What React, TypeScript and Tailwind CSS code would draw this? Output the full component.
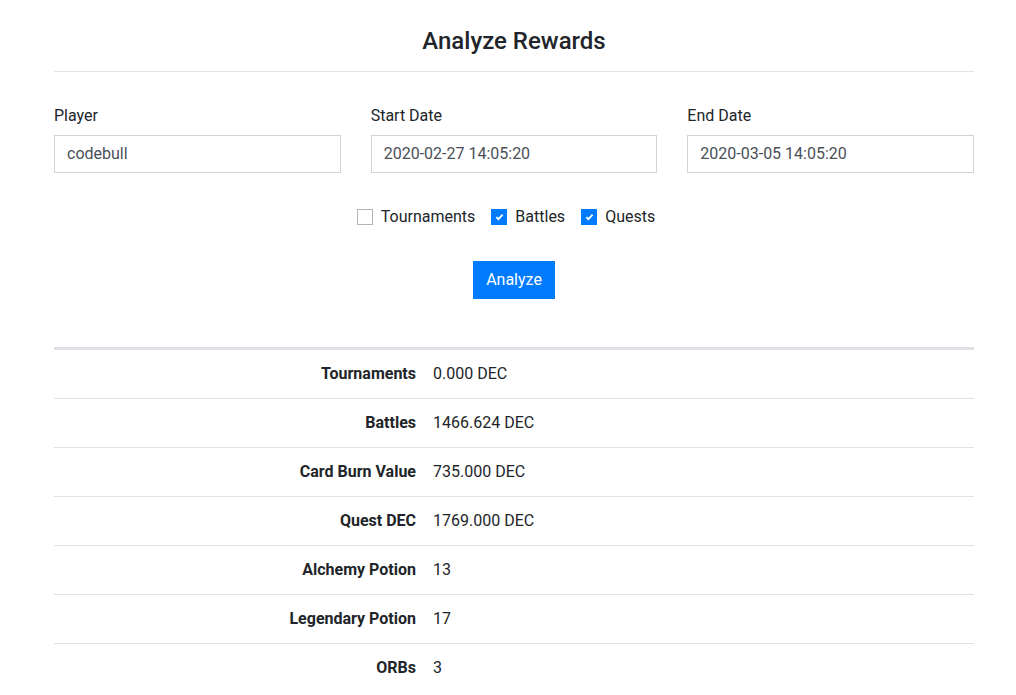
import React from "react";

const rows: [string, string][] = [
  ["Tournaments", "0.000 DEC"],
  ["Battles", "1466.624 DEC"],
  ["Card Burn Value", "735.000 DEC"],
  ["Quest DEC", "1769.000 DEC"],
  ["Alchemy Potion", "13"],
  ["Legendary Potion", "17"],
  ["ORBs", "3"],
];

function Check({ checked, label }: { checked: boolean; label: string }) {
  return (
    <div className="flex items-center gap-[8px]">
      {checked ? (
        <div className="w-[16px] h-[16px] bg-[#007bff] flex items-center justify-center">
          <svg width="9" height="8" viewBox="0 0 9 8">
            <path d="M1.3 4.2 L3.4 6.2 L7.6 1.6" stroke="white" strokeWidth="1.8" fill="none" />
          </svg>
        </div>
      ) : (
        <div className="w-[16px] h-[16px] bg-white border border-[#adb5bd]" />
      )}
      <span className="leading-[24px]">{label}</span>
    </div>
  );
}

function Field({ label, value }: { label: string; value: string }) {
  return (
    <div className="flex flex-col">
      <label className="leading-[24px] mb-[7px]">{label}</label>
      <div className="h-[38px] border border-[#ced4da] px-[12px] flex items-center text-[#495057]">
        {value}
      </div>
    </div>
  );
}

export default function App() {
  return (
    <div
      className="w-full h-[695px] overflow-hidden bg-white text-[#212529] text-[16px]"
      style={{ fontFamily: "Roboto, 'Liberation Sans', sans-serif" }}
    >
      <div className="ml-[54px] w-[920px] pt-[27px]">
        <h3 className="text-[24px] font-medium leading-[29px] text-center">Analyze Rewards</h3>
        <div className="mt-[15px] border-t border-[#e5e5e5]" />
        <div className="mt-[32px] grid grid-cols-3 gap-[30px]">
          <Field label="Player" value="codebull" />
          <Field label="Start Date" value="2020-02-27 14:05:20" />
          <Field label="End Date" value="2020-03-05 14:05:20" />
        </div>
        <div className="mt-[32px] flex justify-center gap-[16px] pr-[16px]">
          <Check checked={false} label="Tournaments" />
          <Check checked={true} label="Battles" />
          <Check checked={true} label="Quests" />
        </div>
        <div className="mt-[32px] flex justify-center">
          <button className="h-[38px] px-[13px] bg-[#007bff] text-white leading-[24px]">Analyze</button>
        </div>
        <div className="mt-[48px] border-t-[3px] border-[#dee2e6]">
          {rows.map(([k, v], i) => (
            <div
              key={k}
              className={`grid grid-cols-[370px_1fr] h-[48px] items-center ${i > 0 ? "border-t border-[#dee2e6] h-[49px]" : ""}`}
            >
              <div className="text-right pr-[8px] font-bold">{k}</div>
              <div className="pl-[9px]">{v}</div>
            </div>
          ))}
        </div>
      </div>
    </div>
  );
}
